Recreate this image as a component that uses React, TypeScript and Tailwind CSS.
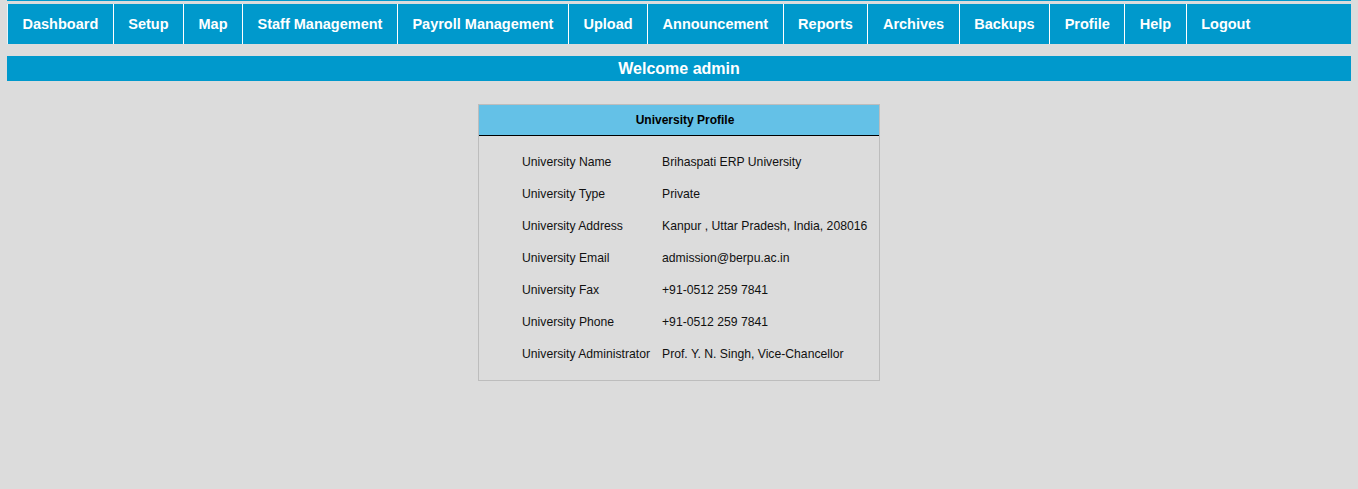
const navItems = [
  'Dashboard',
  'Setup',
  'Map',
  'Staff Management',
  'Payroll Management',
  'Upload',
  'Announcement',
  'Reports',
  'Archives',
  'Backups',
  'Profile',
  'Help',
  'Logout',
]

const profile: [string, string][] = [
  ['University Name', 'Brihaspati ERP University'],
  ['University Type', 'Private'],
  ['University Address', 'Kanpur , Uttar Pradesh, India, 208016'],
  ['University Email', 'admission@berpu.ac.in'],
  ['University Fax', '+91-0512 259 7841'],
  ['University Phone', '+91-0512 259 7841'],
  ['University Administrator', 'Prof. Y. N. Singh, Vice-Chancellor'],
]

export default function App() {
  return (
    <div className="min-h-[489px] bg-[#dcdcdc] px-[7px] font-['Liberation_Sans',Arial,sans-serif]">
      {/* top rule */}
      <div className="h-[1px] bg-[#0099cc]" />

      {/* main menu */}
      <nav className="mt-[3px] flex h-[40px] border-l border-[#e6f4fa] bg-[#0099cc]">
        {navItems.map((item, i) => (
          <a
            key={item}
            href="#"
            className={
              'flex items-center px-[14.5px] pt-[1px] text-[14.5px] font-bold text-white ' +
              (i < navItems.length - 1 ? 'border-r border-white' : '')
            }
          >
            {item}
          </a>
        ))}
      </nav>

      {/* welcome */}
      <div className="mt-[12px] flex h-[25px] items-center justify-center bg-[#0099cc] text-[16px] font-bold text-white">
        Welcome admin
      </div>

      {/* profile card */}
      <div className="mt-[23px] flex justify-center">
        <div className="w-[402px] border border-[#bdbdbd]">
          <div className="flex h-[31px] items-center justify-center border-b border-black bg-[#64c1e7] pl-[12px] text-[12px] font-bold text-black">
            University Profile
          </div>
          <div className="pb-[10px] pl-[43px] pt-[10px]">
            {profile.map(([label, value]) => (
              <div key={label} className="flex h-[32px] items-center text-[12.2px] text-[#111]">
                <span className="w-[140px] shrink-0">{label}</span>
                <span>{value}</span>
              </div>
            ))}
          </div>
        </div>
      </div>
    </div>
  )
}
